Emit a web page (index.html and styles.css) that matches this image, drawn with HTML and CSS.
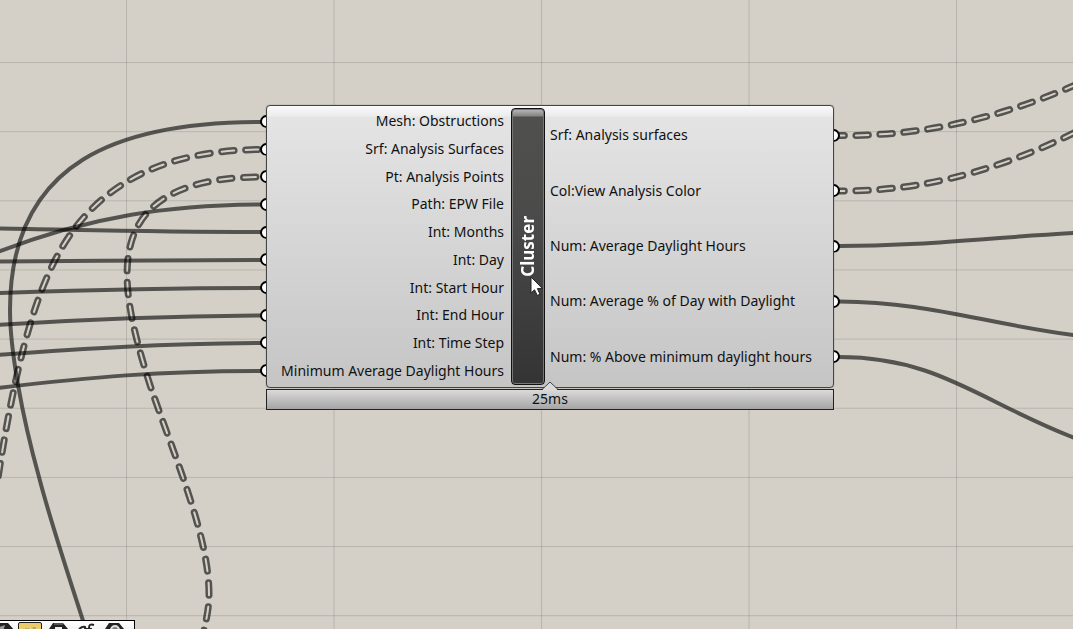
FILE: index.html
```
<!DOCTYPE html>
<html lang="en">
<head>
<meta charset="utf-8">
<title>Cluster</title>
<link rel="stylesheet" href="styles.css">
</head>
<body>
<main class="canvas">
  <svg class="wires" aria-hidden="true">
    <defs>
      <pattern id="grid-v" x="126" y="0" width="207.5" height="100" patternUnits="userSpaceOnUse"><rect class="grid-line" width="1" height="100"/></pattern>
      <pattern id="grid-h" x="0" y="62" width="100" height="69.15" patternUnits="userSpaceOnUse"><rect class="grid-line" width="100" height="1"/></pattern>
      <path id="w1" d="M264 149.5C200 149.5 128 163 79 223C44 266 20 335 -2 478"/>
      <path id="w2" d="M262 177C200 177 145 192 131 243C121 279 131 325 150 385C173 453 209 535 209 594C209 610 206 620 203 635"/>
      <path id="w3" d="M839 135.5C910 136 985 124 1073 86L1120 64"/>
      <path id="w4" d="M839 191C905 191 980 180 1080 130"/>
      <mask id="m1" maskUnits="userSpaceOnUse" x="-50" y="0" width="1300" height="700"><use href="#w1" class="link in outer"/><use href="#w1" class="link in inner"/></mask>
      <mask id="m2" maskUnits="userSpaceOnUse" x="-50" y="0" width="1300" height="700"><use href="#w2" class="link in outer"/><use href="#w2" class="link in inner"/></mask>
      <mask id="m3" maskUnits="userSpaceOnUse" x="-50" y="0" width="1300" height="700"><use href="#w3" class="link out outer"/><use href="#w3" class="link out inner"/></mask>
      <mask id="m4" maskUnits="userSpaceOnUse" x="-50" y="0" width="1300" height="700"><use href="#w4" class="link out outer"/><use href="#w4" class="link out inner"/></mask>
    </defs>
    <rect width="100%" height="100%" fill="url(#grid-v)"/>
    <rect width="100%" height="100%" fill="url(#grid-h)"/>
    <g class="wire">
      <path d="M262 122C120 122 10 160 10 310C10 350 22 416 39 477C50 520 70 580 85 627"/>
      <path d="M262 204.500C170 205 90 216 -2 252"/>
      <path d="M262 232C160 232 90 230 -2 228.500"/>
      <path d="M262 260C160 260 90 261 -2 261.500"/>
      <path d="M262 288C160 288 90 290 -2 293"/>
      <path d="M262 315.500C160 316 90 319 -2 325"/>
      <path d="M262 343C160 344 90 348 -2 355"/>
      <path d="M262 371C160 371 90 377 -2 388"/>
      <path d="M839 246C920 246 970 239 1075 233"/>
      <path d="M839 301.500C930 302 980 323 1080 336"/>
      <path d="M839 357C940 357 983 404 1080 440"/>
    </g>
    <g class="ink">
      <rect x="-50" width="1300" height="700" mask="url(#m1)"/>
      <rect x="-50" width="1300" height="700" mask="url(#m2)"/>
      <rect x="-50" width="1300" height="700" mask="url(#m3)"/>
      <rect x="-50" width="1300" height="700" mask="url(#m4)"/>
    </g>
  </svg>

  <article class="node">
    <div class="node-body">
      <ul class="ports inputs">
        <li>Mesh: Obstructions</li>
        <li>Srf: Analysis Surfaces</li>
        <li>Pt: Analysis Points</li>
        <li>Path: EPW File</li>
        <li>Int: Months</li>
        <li>Int: Day</li>
        <li>Int: Start Hour</li>
        <li>Int: End Hour</li>
        <li>Int: Time Step</li>
        <li>Minimum Average Daylight Hours</li>
      </ul>
      <h1 class="name"><span>Cluster</span></h1>
      <ul class="ports outputs">
        <li>Srf: Analysis surfaces</li>
        <li>Col:View Analysis Color</li>
        <li>Num: Average Daylight Hours</li>
        <li>Num: Average % of Day with Daylight</li>
        <li>Num: % Above minimum daylight hours</li>
      </ul>
    </div>
    <footer class="timing">
      <svg class="notch" width="16" height="9" viewBox="0 0 16 9" aria-hidden="true"><path d="M1 9V8L8 1L15 8V9Z" fill="#dadada"/><path d="M0 8.500L8 1L16 8.500" fill="none" stroke="#444" stroke-width="1"/></svg>
      25ms
    </footer>
  </article>

  <svg class="pointer" width="14" height="21" viewBox="0 0 14 21" aria-hidden="true"><path d="M1 1V17L4.500 13.800L7.300 19.500L10 18.200L7.400 12.600H12.500Z" fill="#fff" stroke="#222"/></svg>

  <nav class="toolbar" aria-label="Display">
    <button class="tool" aria-label="Shaded"><svg width="24" height="20" viewBox="0 0 24 20"><path d="M6 0H17L23 7L17 19H6L1 8Z" fill="#222"/><path d="M8 4L14 2L12 9L7 10Z" fill="#999"/></svg></button>
    <button class="tool active" aria-label="Names"><svg width="24" height="20" viewBox="0 0 24 20"><path d="M7 5V12M9 5L11 10M15 4L12 10M16 4V12" stroke="#888" stroke-width="1" fill="none"/></svg></button>
    <button class="tool" aria-label="Icons"><svg width="24" height="20" viewBox="0 0 24 20"><path d="M6 0H16L21 6L17 17H6L2 6Z" fill="#222"/><path d="M7 1H16" stroke="#888"/><path d="M8 4H15V14H8Z" fill="#eee"/></svg></button>
    <button class="tool" aria-label="Sketch"><svg width="24" height="20" viewBox="0 0 24 20"><path d="M4 6Q8 3 10 4Q11 6 6 13M19 2Q14 0 14 5T11 14M11 6H17" stroke="#222" stroke-width="2" fill="none"/></svg></button>
    <button class="tool" aria-label="Preview"><svg width="24" height="20" viewBox="0 0 24 20"><path d="M6 0H16L21 6L17 17H6L2 6Z" fill="#222"/><circle cx="12" cy="7" r="4" fill="#777" stroke="#ddd" stroke-width="2"/></svg></button>
  </nav>
</main>
</body>
</html>
```
FILE: styles.css
```
*, *::before { box-sizing: border-box; }
body { margin: 0; font: 14px/20px "Noto Sans", "Open Sans", sans-serif; color: #111; }
.canvas { position: relative; height: 100vh; overflow: hidden; background: #d4d0c8; }
.wires { position: absolute; inset: 0; width: 100%; height: 100%; }
.grid-line { fill: rgba(0, 0, 0, .13); }
.wire { fill: none; stroke: rgba(0, 0, 0, .6); stroke-width: 4; }
.ink { fill: rgba(0, 0, 0, .6); }
.link { fill: none; stroke-linecap: round; stroke-dasharray: 12.4 11.6; }
.link.in { stroke-dashoffset: -6; }
.link.out { stroke-dashoffset: 7; }
.outer { stroke: #fff; stroke-width: 7; }
.inner { stroke: #000; stroke-width: 2; }

.node { position: absolute; left: 266px; top: 105px; width: 568px; }
.node-body {
  display: flex;
  height: 283px;
  padding: 2px 0;
  border: 1px solid #444;
  border-radius: 4px;
  background: linear-gradient(#fafafa, #ececec 10px, #e4e4e4 11px, #c5c5c5);
  box-shadow: 0 0 1px #555;
}
.ports { display: flex; flex-direction: column; margin: 0; padding: 0; list-style: none; white-space: nowrap; }
.ports li { position: relative; display: flex; flex: 1; align-items: center; padding-bottom: 1px; }
.ports li::before {
  content: "";
  position: absolute;
  top: 50%;
  width: 13px;
  height: 13px;
  margin-top: -7px;
  background: #fff;
  border: 2px solid #000;
  border-radius: 50%;
}
.inputs { width: 244px; }
.inputs li { justify-content: flex-end; padding-right: 7px; }
.inputs li::before { left: -7px; clip-path: inset(0 7px 0 0); }
.outputs { flex: 1; }
.outputs li { padding-left: 5px; }
.outputs li::before { right: -7px; clip-path: inset(0 0 0 7px); }
.name {
  display: flex;
  align-items: center;
  justify-content: center;
  width: 34px;
  margin: 0;
  border: 1px solid #111;
  border-radius: 4px;
  background: linear-gradient(#bbb, #858585 7px, #50504e 8px, #4a4a4a 40%, #343434);
  box-shadow: inset 0 0 0 1px #777;
  color: #fff;
  font-size: 17px;
  line-height: 24px;
}
.name span { writing-mode: vertical-rl; rotate: 180deg; }
.timing {
  position: relative;
  height: 21px;
  margin-top: 1px;
  border: 1px solid #222;
  background: linear-gradient(#dadada, #a5a5a5);
  line-height: 18px;
  text-align: center;
}
.notch { position: absolute; left: 50%; top: -9px; margin-left: -8px; }
.pointer { position: absolute; left: 530px; top: 276px; }

.toolbar {
  position: absolute;
  left: -11px;
  top: 620px;
  display: flex;
  gap: 4px;
  padding: 1px 8px 1px 0;
  border: 1px solid #000;
  background: linear-gradient(#fff, #ddd);
}
.tool { width: 24px; height: 22px; padding: 0; border: 1px solid transparent; background: none; overflow: hidden; }
.tool svg { display: block; }
.tool.active { border-color: #222; border-radius: 2px; background: #eccb6b; }
```
